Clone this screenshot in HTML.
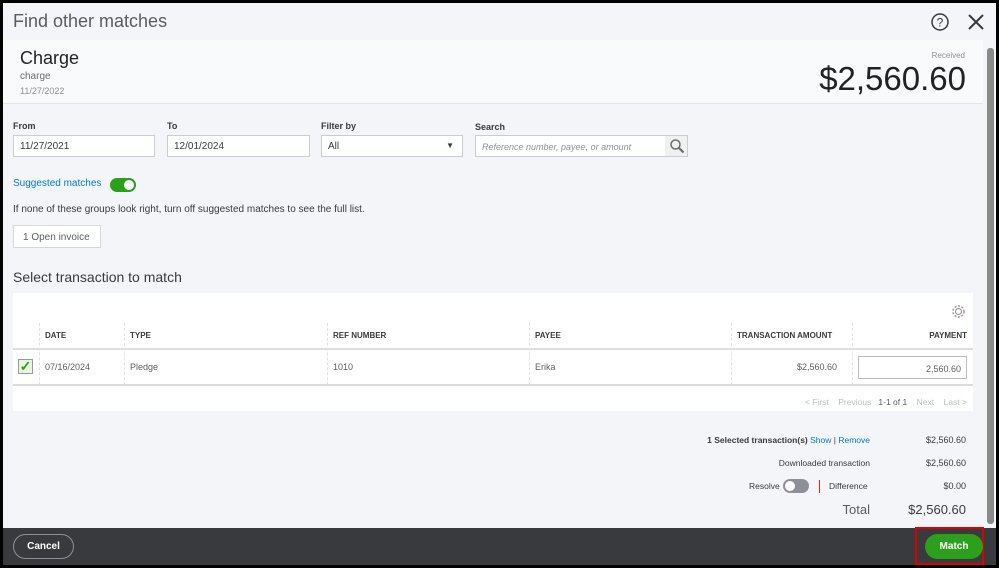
<!DOCTYPE html>
<html><head><style>
*{margin:0;padding:0;box-sizing:border-box}
body{width:999px;height:568px;background:#000;font-family:"Liberation Sans",sans-serif;position:relative;overflow:hidden;color:#393a3d}
.a{position:absolute}
#m{left:3px;top:3px;width:993px;height:562px;background:#f4f5f8}
.lbl{font-size:9px;font-weight:bold;color:#393a3d}
.in{background:#fff;border:1px solid #c9ccd1;height:22px;font-size:10px;padding:5px 6px;color:#393a3d}
th,td{font-size:8.5px}
.th{font-size:8px;font-weight:bold;top:331px}
.vl{position:absolute;top:323px;width:0;height:62px;border-left:1px dashed #e0e0e0}
.r{text-align:right;font-size:9px}
</style></head><body>
<div id="m" class="a"></div>
<div class="a" style="left:13px;top:11px;font-size:18px;color:#5a5c60">Find other matches</div>
<svg class="a" style="left:930px;top:12px" width="20" height="20"><circle cx="10" cy="10" r="8" fill="none" stroke="#393a3d" stroke-width="1.5"/><text x="10" y="14.5" text-anchor="middle" font-size="12" font-family="Liberation Sans" fill="#393a3d">?</text></svg>
<svg class="a" style="left:966px;top:12px" width="20" height="20"><path d="M3 3L17 17M17 3L3 17" stroke="#393a3d" stroke-width="2"/></svg>
<div class="a" style="left:3px;top:40px;width:980px;height:64px;background:#f9fafb;border-bottom:1px solid #e3e5e8"></div>
<div class="a" style="left:20px;top:48px;font-size:18px;color:#222">Charge</div>
<div class="a" style="left:20px;top:71px;font-size:10px;color:#6b6c72">charge</div>
<div class="a" style="left:20px;top:86px;font-size:9px;color:#8d9096">11/27/2022</div>
<div class="a" style="right:34px;top:51px;font-size:8px;color:#8d9096">Received</div>
<div class="a" style="right:33px;top:60px;font-size:33px;color:#222">$2,560.60</div>
<div class="a" style="left:987px;top:48px;width:7px;height:476px;background:#8a8a8a;border-radius:3px"></div>
<div class="a lbl" style="left:13px;top:121px">From</div>
<div class="a lbl" style="left:167px;top:121px">To</div>
<div class="a lbl" style="left:321px;top:121px">Filter by</div>
<div class="a lbl" style="left:475px;top:122px">Search</div>
<div class="a in" style="left:13px;top:135px;width:142px">11/27/2021</div>
<div class="a in" style="left:167px;top:135px;width:143px">12/01/2024</div>
<div class="a in" style="left:321px;top:135px;width:142px">All<span style="position:absolute;right:8px;top:5px;font-size:8px">▼</span></div>
<div class="a in" style="left:475px;top:135px;width:213px;font-style:italic;font-size:9px;color:#8d9096;padding-top:6px">Reference number, payee, or amount<span style="position:absolute;right:0;top:0;width:22px;height:20px;background:#f0f0f0"></span></div>
<svg class="a" style="left:669px;top:138px" width="16" height="16"><circle cx="6.5" cy="6.5" r="4.5" fill="none" stroke="#6b6c72" stroke-width="1.5"/><path d="M10 10L14.5 14.5" stroke="#6b6c72" stroke-width="2.2"/></svg>
<div class="a" style="left:13px;top:178px;font-size:10px;color:#0077c5">Suggested matches</div>
<div class="a" style="left:110px;top:178px;width:26px;height:14px;border-radius:7px;background:#2ca01c"><div style="position:absolute;right:2px;top:2px;width:10px;height:10px;border-radius:5px;background:#fff"></div></div>
<div class="a" style="left:13px;top:204px;font-size:10px;color:#393a3d">If none of these groups look right, turn off suggested matches to see the full list.</div>
<div class="a" style="left:13px;top:225px;width:88px;height:23px;background:#fff;border:1px solid #d4d7dc;font-size:10px;padding:6px 9px;color:#5a5c60">1 Open invoice</div>
<div class="a" style="left:13px;top:269px;font-size:14px;color:#393a3d">Select transaction to match</div>
<div class="a" style="left:13px;top:293px;width:960px;height:118px;background:#fff"></div>
<svg class="a" style="left:951px;top:304px" width="15" height="15"><circle cx="7.5" cy="7.5" r="3" fill="none" stroke="#999" stroke-width="1.2"/><circle cx="7.5" cy="7.5" r="5.5" fill="none" stroke="#999" stroke-width="1.5" stroke-dasharray="2 1.6"/></svg>
<div class="a" style="left:13px;top:348px;width:960px;height:2px;background:#ddd"></div>
<div class="a" style="left:13px;top:384px;width:960px;height:2px;background:#ddd"></div>
<div class="vl" style="left:39px"></div><div class="vl" style="left:124px"></div><div class="vl" style="left:327px"></div><div class="vl" style="left:529px"></div><div class="vl" style="left:731px"></div><div class="vl" style="left:852px"></div>
<div class="a th" style="left:45px">DATE</div><div class="a th" style="left:130px">TYPE</div><div class="a th" style="left:333px">REF NUMBER</div><div class="a th" style="left:535px">PAYEE</div><div class="a th" style="left:737px">TRANSACTION AMOUNT</div><div class="a th" style="right:32px">PAYMENT</div>
<div class="a" style="left:18px;top:359px;width:15px;height:15px;border:1px solid #999;background:#e8f5e0;color:#2ca01c;font-size:14px;line-height:13px;text-align:center;font-weight:bold">✓</div>
<div class="a" style="left:45px;top:362px;font-size:9px;color:#5a5c60">07/16/2024</div>
<div class="a" style="left:130px;top:362px;font-size:9px;color:#5a5c60">Pledge</div>
<div class="a" style="left:333px;top:362px;font-size:9px;color:#5a5c60">1010</div>
<div class="a" style="left:535px;top:362px;font-size:9px;color:#5a5c60">Erika</div>
<div class="a" style="right:162px;top:362px;font-size:9px;color:#5a5c60">$2,560.60</div>
<div class="a" style="left:858px;top:356px;width:109px;height:23px;border:1px solid #bbb;font-size:9px;text-align:right;padding:7px 5px;color:#5a5c60">2,560.60</div>
<div class="a" style="right:32px;top:397px;font-size:8.5px;color:#bbb">&lt; First &nbsp;&nbsp; Previous &nbsp;&nbsp;<span style="color:#5a5c60">1-1 of 1</span>&nbsp;&nbsp;&nbsp; Next &nbsp;&nbsp; Last &gt;</div>
<div class="a r" style="right:129px;top:435px;font-size:8.5px"><b>1 Selected transaction(s)</b> <span style="color:#0077c5">Show</span> | <span style="color:#0077c5">Remove</span></div>
<div class="a r" style="right:33px;top:435px">$2,560.60</div>
<div class="a r" style="right:129px;top:458px;font-size:8.5px">Downloaded transaction</div>
<div class="a r" style="right:33px;top:458px">$2,560.60</div>
<div class="a" style="left:749px;top:481px;font-size:8.5px">Resolve</div>
<div class="a" style="left:783px;top:479px;width:26px;height:14px;border-radius:7px;background:#8d9096"><div style="position:absolute;left:2px;top:2px;width:10px;height:10px;border-radius:5px;background:#fff"></div></div>
<div class="a" style="left:819px;top:480px;width:1px;height:13px;background:#d52b1e"></div>
<div class="a" style="left:829px;top:481px;font-size:8.5px">Difference</div>
<div class="a r" style="right:33px;top:481px">$0.00</div>
<div class="a r" style="right:129px;top:502px;font-size:13px;color:#5a5c60">Total</div>
<div class="a r" style="right:33px;top:502px;font-size:13px">$2,560.60</div>
<div class="a" style="left:3px;top:528px;width:993px;height:37px;background:#393a3d"></div>
<div class="a" style="left:13px;top:534px;width:61px;height:25px;border:1px solid #8d9096;border-radius:13px;color:#fff;font-size:10px;font-weight:bold;text-align:center;line-height:23px">Cancel</div>
<div class="a" style="left:915px;top:527px;width:69px;height:38px;border:2px solid #d00"></div>
<div class="a" style="left:925px;top:534px;width:58px;height:25px;border-radius:13px;background:#2ca01c;color:#fff;font-size:10px;font-weight:bold;text-align:center;line-height:25px">Match</div>
</body></html>
